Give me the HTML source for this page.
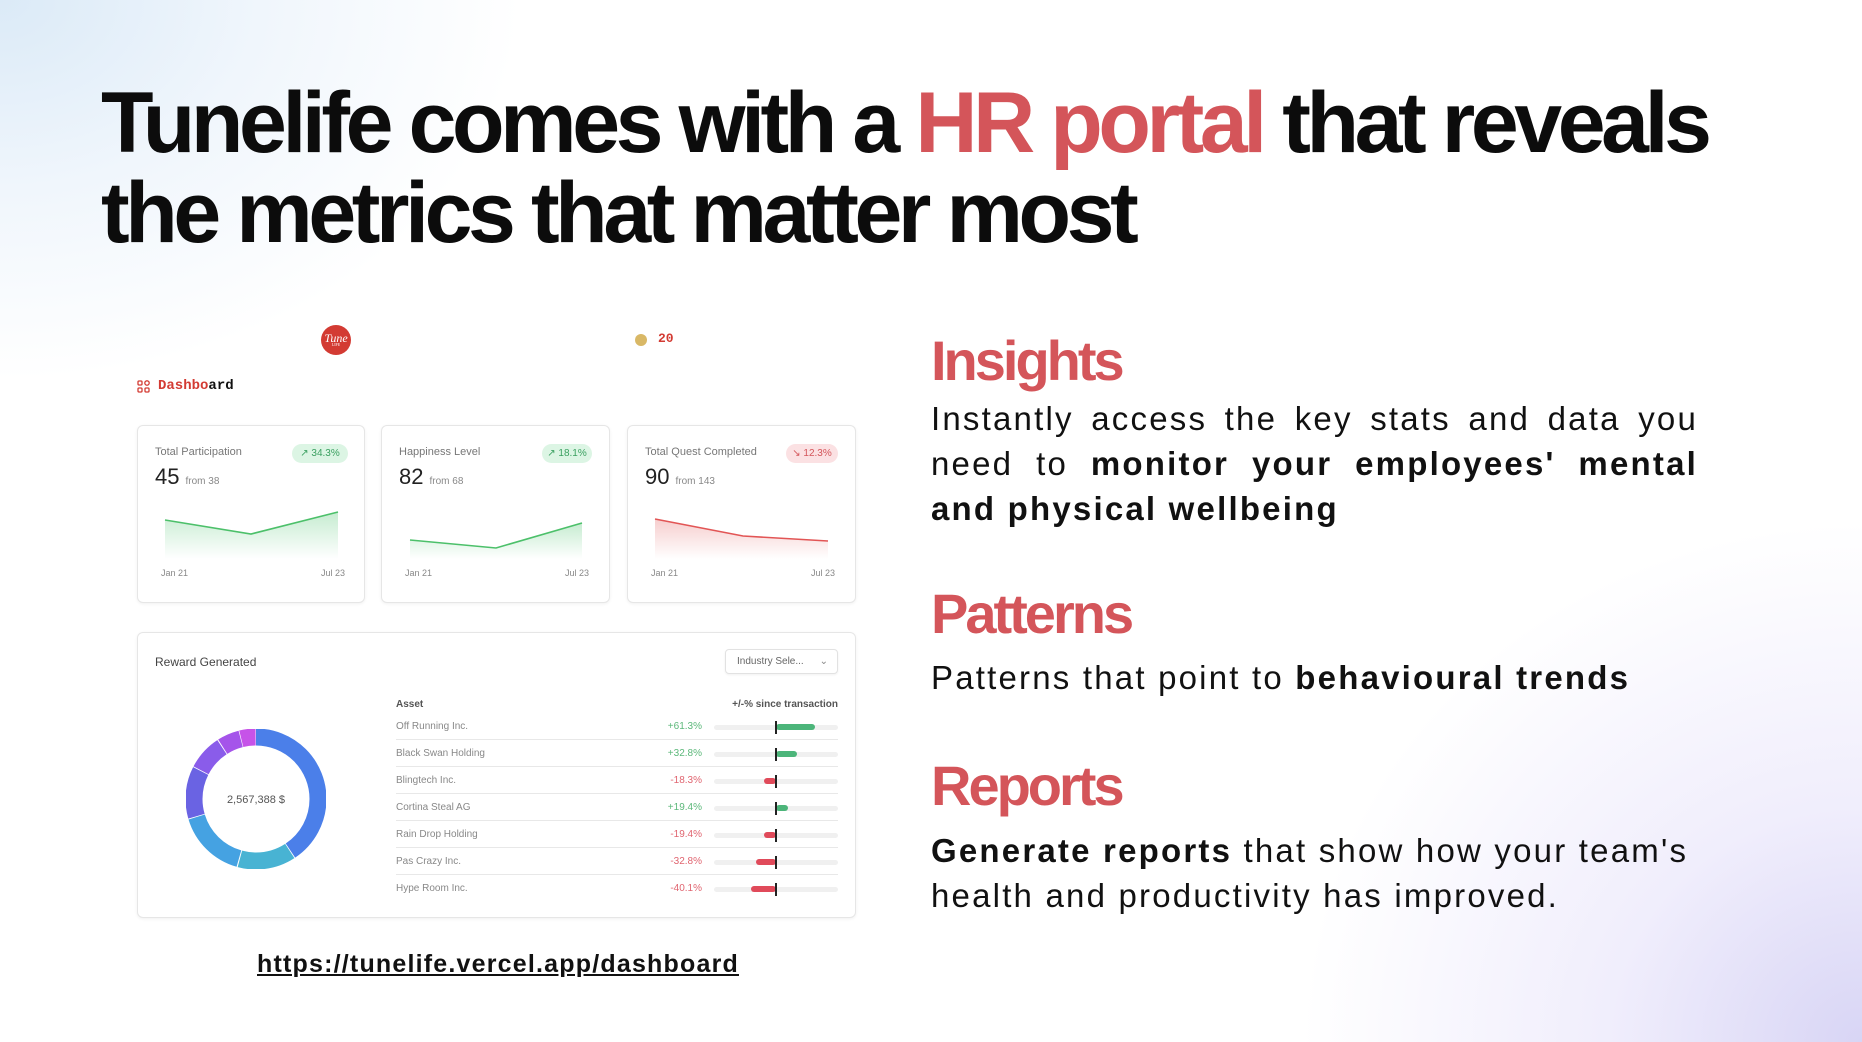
<!DOCTYPE html>
<html><head><meta charset="utf-8"><style>
*{margin:0;padding:0;box-sizing:border-box}
body{width:1862px;height:1042px;overflow:hidden;font-family:"Liberation Sans",sans-serif;color:#111;
background:radial-gradient(ellipse 520px 380px at 0px 0px,#dbeaf7 0%,rgba(230,240,250,0.6) 50%,rgba(255,255,255,0) 100%),
radial-gradient(ellipse 560px 520px at 1862px 1042px,#d8d5f5 0%,rgba(230,226,250,0.6) 45%,rgba(255,255,255,0) 100%),#fff;position:relative}
.abs{position:absolute}
h1{position:absolute;left:101px;top:78px;font-size:86px;line-height:90px;font-weight:bold;letter-spacing:-4.4px;color:#0c0c0c;white-space:nowrap}
.red{color:#d4555a}
.hd{position:absolute;left:931px;font-size:56px;font-weight:bold;color:#d4555a;letter-spacing:-3px}
.bd{position:absolute;left:931px;width:767px;font-size:33px;line-height:45px;color:#111;letter-spacing:2.2px}
.card{position:absolute;background:#fff;border:1px solid #e6e6e6;border-radius:6px;box-shadow:0 1px 3px rgba(0,0,0,0.06)}
.ct{position:absolute;left:17px;top:20px;font-size:11px;color:#777}
.num{position:absolute;left:17px;top:38px;font-size:22px;color:#222}
.num small{font-size:10px;color:#888;margin-left:6px}
.badge{position:absolute;left:154px;top:18px;width:56px;height:19px;border-radius:10px;font-size:10px;line-height:19px;text-align:center}
.lbl{position:absolute;top:142px;font-size:9px;color:#888}
.row{position:absolute;left:258px;width:442px;height:27px;border-bottom:1px solid #e8e8e8;font-size:10px;color:#888}
.row .n{position:absolute;left:0;top:8px}
.row .v{position:absolute;right:136px;top:8px}
.row .tr{position:absolute;left:318px;top:12px;width:124px;height:5px;background:#f0f0f0;border-radius:3px}
.row .bar{position:absolute;top:11px;height:6px;border-radius:3px}
.row .mk{position:absolute;left:379px;top:8px;width:2px;height:13px;background:#222}
</style></head><body>
<h1>Tunelife comes with a <span class="red">HR portal</span> that reveals<br>the metrics that matter most</h1>

<div class="abs" style="left:321px;top:325px;width:30px;height:30px;border-radius:50%;background:#d33b33;color:#fff;font-family:'Liberation Serif',serif;font-style:italic;font-size:12px;text-align:center;line-height:26px">Tune<div style="position:absolute;top:18px;width:30px;font-size:4px;line-height:4px;font-style:normal">LIFE</div></div>
<div class="abs" style="left:635px;top:334px;width:12px;height:12px;border-radius:50%;background:#d9b866"></div>
<div class="abs" style="left:658px;top:331px;font-family:'Liberation Mono',monospace;font-weight:bold;font-size:13px;color:#d33b33">20</div>
<svg class="abs" style="left:137px;top:380px" width="13" height="13" viewBox="0 0 13 13" fill="none" stroke="#d33b33" stroke-width="1.3"><rect x="1" y="1" width="4" height="4" rx="1"/><circle cx="10" cy="3" r="2.2"/><rect x="1" y="8" width="4" height="4" rx="1"/><rect x="8" y="8" width="4" height="4" rx="1"/></svg>
<div class="abs" style="left:158px;top:378px;font-family:'Liberation Mono',monospace;font-weight:bold;font-size:14px;color:#d33b33">Dashbo<span style="color:#111">ard</span></div>

<div class="card" style="left:137px;top:425px;width:228px;height:178px">
<div class="ct">Total Participation</div><div class="num">45<small>from 38</small></div>
<div class="badge" style="background:#dcf5e4;color:#3aa060">↗ 34.3%</div>
<svg class="abs" style="left:0;top:0" width="228" height="178"><defs><linearGradient id="g1" x1="0" y1="0" x2="0" y2="1"><stop offset="0" stop-color="#5cc87a" stop-opacity=".35"/><stop offset="1" stop-color="#5cc87a" stop-opacity="0"/></linearGradient></defs><path d="M27 94 L113 108 L200 86 L200 133 L27 133Z" fill="url(#g1)"/><path d="M27 94 L113 108 L200 86" stroke="#4cc06a" stroke-width="1.6" fill="none"/></svg>
<div class="lbl" style="left:23px">Jan 21</div><div class="lbl" style="left:183px">Jul 23</div></div>

<div class="card" style="left:381px;top:425px;width:229px;height:178px">
<div class="ct">Happiness Level</div><div class="num">82<small>from 68</small></div>
<div class="badge" style="background:#dcf5e4;color:#3aa060;left:160px;width:50px">↗ 18.1%</div>
<svg class="abs" style="left:0;top:0" width="228" height="178"><path d="M28 114 L114 122 L200 97 L200 133 L28 133Z" fill="url(#g1)"/><path d="M28 114 L114 122 L200 97" stroke="#4cc06a" stroke-width="1.6" fill="none"/></svg>
<div class="lbl" style="left:23px">Jan 21</div><div class="lbl" style="left:183px">Jul 23</div></div>

<div class="card" style="left:627px;top:425px;width:229px;height:178px">
<div class="ct">Total Quest Completed</div><div class="num">90<small>from 143</small></div>
<div class="badge" style="background:#fbe1e3;color:#d4555a;left:158px;width:52px">↘ 12.3%</div>
<svg class="abs" style="left:0;top:0" width="228" height="178"><defs><linearGradient id="g2" x1="0" y1="0" x2="0" y2="1"><stop offset="0" stop-color="#e25a5a" stop-opacity=".3"/><stop offset="1" stop-color="#e25a5a" stop-opacity="0"/></linearGradient></defs><path d="M27 93 L115 110 L200 115 L200 133 L27 133Z" fill="url(#g2)"/><path d="M27 93 L115 110 L200 115" stroke="#e25555" stroke-width="1.6" fill="none"/></svg>
<div class="lbl" style="left:23px">Jan 21</div><div class="lbl" style="left:183px">Jul 23</div></div>

<div class="card" style="left:137px;top:632px;width:719px;height:286px">
<div class="abs" style="left:17px;top:22px;font-size:12px;color:#444">Reward Generated</div>
<div class="abs" style="left:587px;top:16px;width:113px;height:25px;border:1px solid #e2e2e2;border-radius:4px;font-size:10px;color:#666;line-height:23px;padding-left:11px;box-shadow:0 1px 2px rgba(0,0,0,.06)">Industry Sele... <span style="position:absolute;right:9px;color:#888">⌄</span></div>
<svg class="abs" style="left:48px;top:96px" width="140" height="140" viewBox="-70 -70 140 140">
<g fill="none" stroke-width="17" transform="rotate(-90)">
<circle r="62" stroke="#4b7fe9" stroke-dasharray="158.2 400" stroke-dashoffset="0"/>
<circle r="62" stroke="#48b3d3" stroke-dasharray="52 400" stroke-dashoffset="-159"/>
<circle r="62" stroke="#45a2e2" stroke-dasharray="61.8 400" stroke-dashoffset="-212"/>
<circle r="62" stroke="#6a63e3" stroke-dasharray="46.5 400" stroke-dashoffset="-274.6"/>
<circle r="62" stroke="#8a5cea" stroke-dasharray="31.5 400" stroke-dashoffset="-321.9"/>
<circle r="62" stroke="#a554ea" stroke-dasharray="19.6 400" stroke-dashoffset="-354.3"/>
<circle r="62" stroke="#c653e8" stroke-dasharray="14.5 400" stroke-dashoffset="-374.5"/>
</g>
<text x="0" y="4" text-anchor="middle" font-size="11" fill="#555" font-family="Liberation Sans">2,567,388 $</text></svg>
<div class="abs" style="left:258px;top:66px;font-size:10px;font-weight:bold;color:#555">Asset</div>
<div class="abs" style="left:500px;width:200px;text-align:right;top:66px;font-size:10px;font-weight:bold;color:#555">+/-% since transaction</div>
<div class="row" style="top:80px"><span class="n">Off Running Inc.</span><span class="v" style="color:#5cb87a">+61.3%</span><div class="tr"></div><div class="bar" style="left:380px;width:39px;background:#4cb57a"></div><div class="mk"></div></div>
<div class="row" style="top:107px"><span class="n">Black Swan Holding</span><span class="v" style="color:#5cb87a">+32.8%</span><div class="tr"></div><div class="bar" style="left:380px;width:21px;background:#4cb57a"></div><div class="mk"></div></div>
<div class="row" style="top:134px"><span class="n">Blingtech Inc.</span><span class="v" style="color:#e06570">-18.3%</span><div class="tr"></div><div class="bar" style="left:368px;width:12px;background:#e04a5a"></div><div class="mk"></div></div>
<div class="row" style="top:161px"><span class="n">Cortina Steal AG</span><span class="v" style="color:#5cb87a">+19.4%</span><div class="tr"></div><div class="bar" style="left:380px;width:12px;background:#4cb57a"></div><div class="mk"></div></div>
<div class="row" style="top:188px"><span class="n">Rain Drop Holding</span><span class="v" style="color:#e06570">-19.4%</span><div class="tr"></div><div class="bar" style="left:368px;width:12px;background:#e04a5a"></div><div class="mk"></div></div>
<div class="row" style="top:215px"><span class="n">Pas Crazy Inc.</span><span class="v" style="color:#e06570">-32.8%</span><div class="tr"></div><div class="bar" style="left:360px;width:20px;background:#e04a5a"></div><div class="mk"></div></div>
<div class="row" style="top:242px;border-bottom:none"><span class="n">Hype Room Inc.</span><span class="v" style="color:#e06570">-40.1%</span><div class="tr"></div><div class="bar" style="left:355px;width:25px;background:#e04a5a"></div><div class="mk"></div></div>
</div>

<div class="abs" style="left:257px;top:950px;font-size:25px;font-weight:bold;text-decoration:underline;color:#111;letter-spacing:1.2px">https://tunelife.vercel.app/dashboard</div>

<div class="hd" style="top:328px">Insights</div>
<div class="bd" style="top:396px;text-align:justify;text-align-last:left">Instantly access the key stats and data you need to <b>monitor your employees' mental and physical wellbeing</b></div>
<div class="hd" style="top:581px">Patterns</div>
<div class="bd" style="top:655px">Patterns that point to <b>behavioural trends</b></div>
<div class="hd" style="top:753px">Reports</div>
<div class="bd" style="top:828px"><b>Generate reports</b> that show how your team's health and productivity has improved.</div>
</body></html>
